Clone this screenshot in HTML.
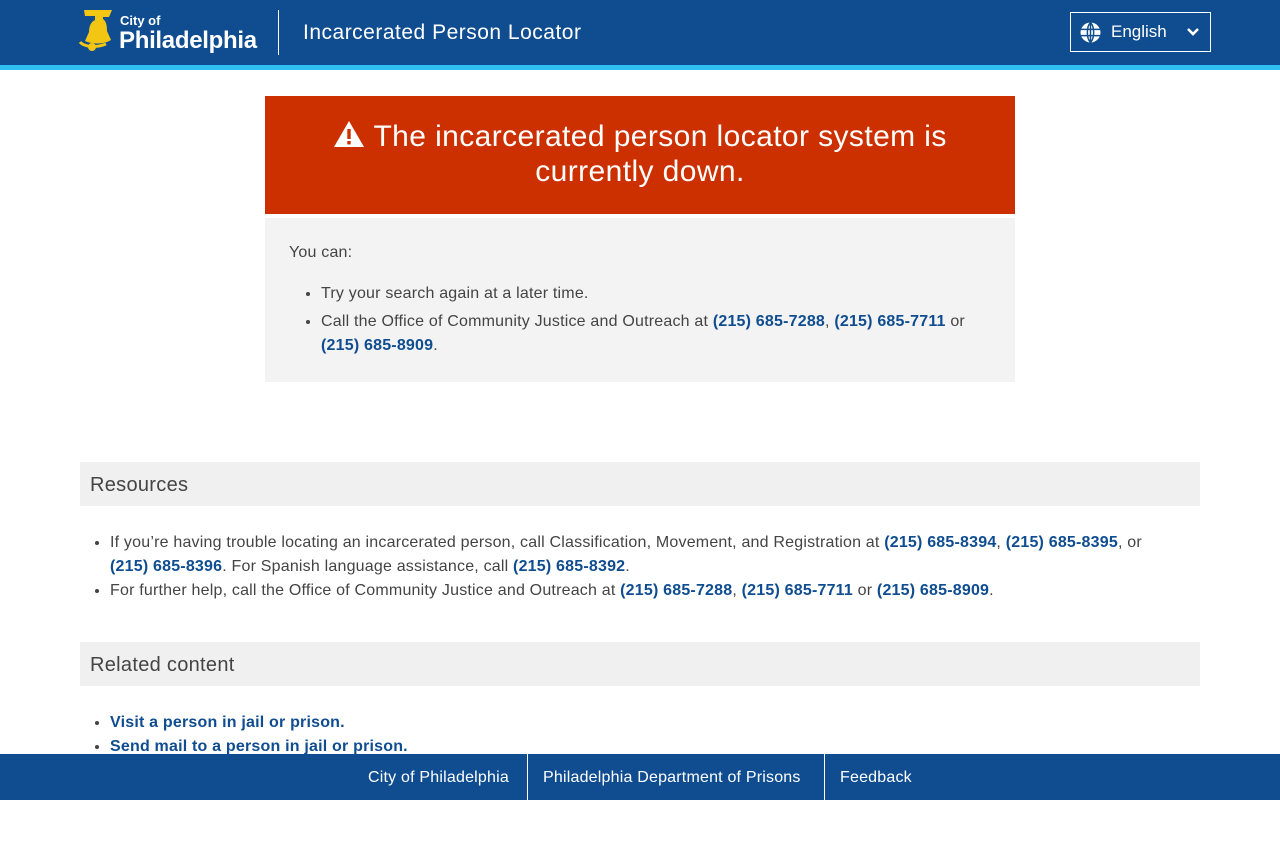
<!DOCTYPE html>
<html><head><meta charset="utf-8"><style>
*{margin:0;padding:0;box-sizing:border-box}
body{width:1280px;height:844px;background:#fff;font-family:"Liberation Sans",sans-serif;color:#444;position:relative;overflow:hidden}
.hdr{position:absolute;left:0;top:0;width:1280px;height:65px;background:#0f4d90}
.stripe{position:absolute;left:0;top:65px;width:1280px;height:5px;background:#2dc0f1}
.city{position:absolute;left:120px;top:13px;color:#fff;font-size:13px;font-weight:bold}
.phl{position:absolute;left:119px;top:27px;color:#fff;font-size:24px;font-weight:bold;letter-spacing:-0.3px}
.sep{position:absolute;left:278px;top:10px;width:1px;height:45px;background:#fff}
.title{position:absolute;left:303px;top:21px;color:#fff;font-size:21px;letter-spacing:0.5px}
.lang{position:absolute;left:1070px;top:12px;width:141px;height:40px;border:1px solid #fff;color:#fff;font-size:17px}
.alert{position:absolute;left:265px;top:96px;width:750px;height:118px;background:#cc3000;color:#fff;font-size:30px;text-align:center;padding-top:23px;line-height:35px;letter-spacing:0.4px}
.box{position:absolute;left:265px;top:218px;width:750px;height:164px;background:#f3f3f3;font-size:16px;padding:26px 24px;letter-spacing:0.2px}
ul{padding-left:32px}
li{line-height:24px}
a{color:#0f4d90;font-weight:bold;text-decoration:none;white-space:nowrap}
.sh{position:absolute;left:80px;width:1120px;height:44px;background:#f0f0f0;font-size:20px;padding:12px 10px;color:#444;letter-spacing:0.3px}
.sec{position:absolute;left:78px;font-size:16px;width:1120px;letter-spacing:0.2px}
.ft{position:absolute;left:0;top:754px;width:1280px;height:46px;background:#0f4d90;color:#fff;font-size:16px}
.ft span{position:absolute;top:15px;letter-spacing:0.2px}
.fs{position:absolute;top:0;width:1px;height:46px;background:#fff}
</style></head><body>
<div class="hdr">
<svg style="position:absolute;left:76px;top:8px" width="40" height="45" viewBox="0 0 40 45"><path d="M8 2h28l-3 7h-6v2c3 2 4 6 4 12l4 9c-6 4-18 5-26 1l4-9c0-6 2-10 6-12V8H9z" fill="#f3c613"/><path d="M4 34c4 5 16 6 26 2" stroke="#f3c613" stroke-width="3" fill="none"/><circle cx="16" cy="39" r="4" fill="#f3c613"/></svg>
<div class="city">City of</div><div class="phl">Philadelphia</div>
<div class="sep"></div><div class="title">Incarcerated Person Locator</div>
<div class="lang"><svg style="position:absolute;left:9px;top:9px" width="21" height="21" viewBox="0 0 20 20"><circle cx="10" cy="10" r="9.5" fill="#fff"/><path d="M0.5 7h19M0.5 13h19M10 .5v19M10 .5c-4 4-4 15 0 19M10 .5c4 4 4 15 0 19" stroke="#0f4d90" stroke-width="1.4" fill="none"/></svg><span style="position:absolute;left:40px;top:9px">English</span><svg style="position:absolute;left:116px;top:14px" width="12" height="10" viewBox="0 0 12 10"><path d="M1 2l5 5 5-5" stroke="#fff" stroke-width="2.6" fill="none"/></svg></div>
</div>
<div class="stripe"></div>
<div class="alert"><svg width="32" height="28" viewBox="0 0 32 28" style="vertical-align:-2px"><path d="M16 1L31 27H1z" fill="#fff"/><rect x="14.3" y="9" width="3.4" height="10" fill="#cc3000"/><rect x="14.3" y="21" width="3.4" height="3.4" fill="#cc3000"/></svg> The incarcerated person locator system is<br>currently down.</div>
<div class="box"><p>You can:</p><ul style="margin-top:20px"><li>Try your search again at a later time.</li><li style="margin-top:4px">Call the Office of Community Justice and Outreach at <a>(215) 685-7288</a>, <a>(215) 685-7711</a> or <a>(215) 685-8909</a>.</li></ul></div>
<div class="sh" style="top:462px">Resources</div>
<div class="sec" style="top:531px"><ul><li>If you’re having trouble locating an incarcerated person, call Classification, Movement, and Registration at <a>(215) 685-8394</a>, <a>(215) 685-8395</a>, or <a>(215) 685-8396</a>. For Spanish language assistance, call <a>(215) 685-8392</a>.</li><li>For further help, call the Office of Community Justice and Outreach at <a>(215) 685-7288</a>, <a>(215) 685-7711</a> or <a>(215) 685-8909</a>.</li></ul></div>
<div class="sh" style="top:642px">Related content</div>
<div class="sec" style="top:711px"><ul><li><a>Visit a person in jail or prison.</a></li><li><a>Send mail to a person in jail or prison.</a></li></ul></div>
<div class="ft"><span style="left:368px">City of Philadelphia</span><div class="fs" style="left:527px"></div><span style="left:543px">Philadelphia Department of Prisons</span><div class="fs" style="left:824px"></div><span style="left:840px">Feedback</span></div>
</body></html>
